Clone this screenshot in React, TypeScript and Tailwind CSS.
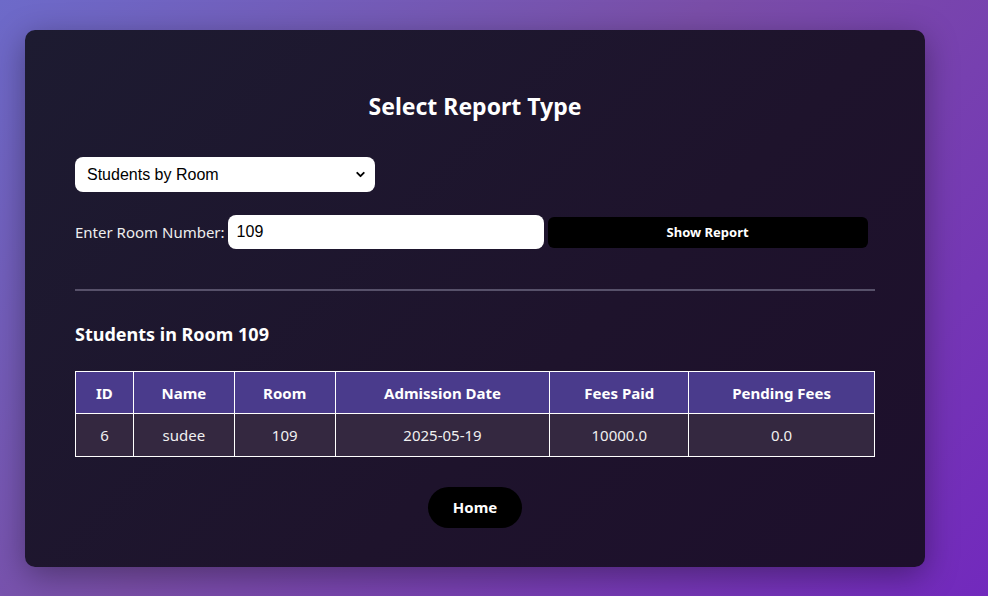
import { ChevronDown } from "lucide-react";

const cols = [
  { label: "ID", w: "w-[58px]" },
  { label: "Name", w: "w-[101px]" },
  { label: "Room", w: "w-[101px]" },
  { label: "Admission Date", w: "w-[215px]" },
  { label: "Fees Paid", w: "w-[139px]" },
  { label: "Pending Fees", w: "w-[186px]" },
];

const row = ["6", "sudee", "109", "2025-05-19", "10000.0", "0.0"];

export default function App() {
  return (
    <div className="w-[988px] h-[596px] overflow-hidden bg-[linear-gradient(135deg,#6d6ac9_0%,#7a4ea8_45%,#7229bd_100%)] pt-[30px] pl-[25px] font-['Segoe_UI','Noto_Sans',sans-serif]">
      <div className="w-[900px] h-[537px] rounded-[10px] bg-[linear-gradient(135deg,#1d1b31_0%,#1e132c_60%,#1d0f2c_100%)] shadow-[0_8px_32px_rgba(0,0,0,0.35)] px-[50px] pt-[61px] text-white">
        <h2 className="text-center text-[23px] leading-[31px] font-bold">Select Report Type</h2>

        <div className="mt-[35px] relative w-[300px] h-[35px] rounded-[8px] bg-white text-black">
          <span className="absolute left-[12px] top-[8px] text-[16px] leading-[19px] font-['Liberation_Sans',Arial,sans-serif]">
            Students by Room
          </span>
          <ChevronDown className="absolute right-[8px] top-[11px] w-[13px] h-[13px]" strokeWidth={3.5} />
        </div>

        <div className="mt-[23px] flex items-center h-[34px]">
          <span className="text-[15px] text-[#eeeeee] mr-[3px]">Enter Room Number:</span>
          <div className="w-[316px] h-[34px] rounded-[8px] bg-white text-black flex items-center pl-[9px] text-[16px] font-['Liberation_Sans',Arial,sans-serif]">
            109
          </div>
          <button className="ml-[4px] w-[320px] h-[31px] rounded-[6px] bg-black text-white text-[13px] font-bold pt-[1px]">
            Show Report
          </button>
        </div>

        <div className="mt-[40px] h-[2px] bg-[#57516a]" />

        <h3 className="mt-[30px] text-[18px] leading-[26px] font-bold">Students in Room 109</h3>

        <table className="mt-[24px] w-[800px] border-collapse text-[15px]">
          <thead>
            <tr className="bg-[#4a3b8c] h-[42px]">
              {cols.map((c) => (
                <th key={c.label} className={`${c.w} border border-white font-bold text-center pt-[1px]`}>
                  {c.label}
                </th>
              ))}
            </tr>
          </thead>
          <tbody>
            <tr className="bg-[#342840] h-[43px]">
              {row.map((v, i) => (
                <td key={i} className="border border-white text-center text-[#f0f0f0]">
                  {v}
                </td>
              ))}
            </tr>
          </tbody>
        </table>

        <div className="mt-[30px] flex justify-center">
          <button className="w-[94px] h-[41px] rounded-full bg-black text-white text-[15px] font-bold">Home</button>
        </div>
      </div>
    </div>
  );
}
